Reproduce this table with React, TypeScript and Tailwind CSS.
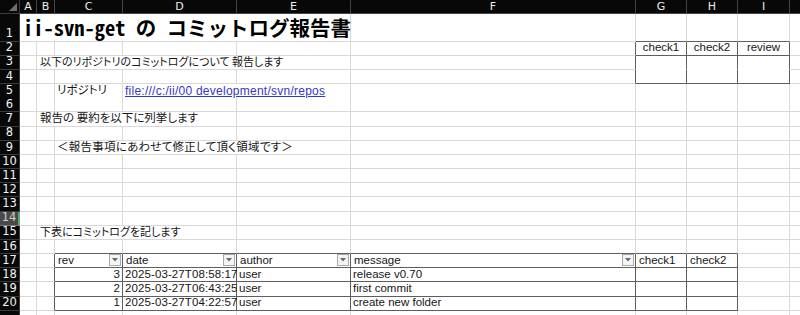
import React, { ReactNode } from "react";

const COLS =
  "grid grid-cols-[20px_17px_18px_68px_114px_114px_285px_51px_51px_52px_60px]";

const JP = "font-['Noto_Sans_CJK_JP',sans-serif] [font-feature-settings:'palt']";
const LAT = "font-['Liberation_Sans','Noto_Sans_CJK_JP',sans-serif]";
const HEAD = "font-['DejaVu_Sans',sans-serif]";

type Spec = { col: number; span?: number; content?: ReactNode; cls?: string };

const spanCls: Record<number, string> = {
  1: "col-span-1",
  2: "col-span-2",
  3: "col-span-3",
  4: "col-span-4",
  5: "col-span-5",
};

function darkBottom(r: number, c: number) {
  return (
    (r >= 16 && r <= 20 && c >= 3 && c <= 8) ||
    ((r === 1 || r === 2 || r === 4) && c >= 7 && c <= 9)
  );
}
function noBottom(r: number, c: number) {
  return r === 3 && c >= 7 && c <= 9;
}
function darkRight(r: number, c: number) {
  return (
    (r >= 17 && r <= 20 && c >= 2 && c <= 8) ||
    (r >= 2 && r <= 4 && c >= 6 && c <= 9)
  );
}

function Cell({
  r,
  c,
  span = 1,
  children,
  cls = "",
}: {
  r: number;
  c: number;
  span?: number;
  children?: ReactNode;
  cls?: string;
}) {
  const last = c + span - 1;
  const rc = darkRight(r, last) ? "border-r-[#5e5e5e]" : "border-r-[#d9d9d9]";
  const bc = noBottom(r, c)
    ? "border-b-white"
    : darkBottom(r, c)
    ? "border-b-[#5e5e5e]"
    : "border-b-[#d9d9d9]";
  return (
    <div
      className={`${spanCls[span]} border-r border-b ${rc} ${bc} bg-white min-w-0 overflow-visible whitespace-nowrap text-[#161616] ${cls}`}
    >
      {children}
    </div>
  );
}

function RowHead({ n, active }: { n?: number; active?: boolean }) {
  return (
    <div
      className={`flex items-end justify-center pb-[1px] border-b ${
        active
          ? "bg-[#4a4a4a] text-[#cfcfcf] border-b-[#7a7a7a] border-r-2 border-r-[#5fa86c]"
          : "bg-[#080808] text-[#f2f2f2] border-b-[#3a3a3a] border-r border-r-[#3a3a3a]"
      } ${HEAD} text-[11.5px] leading-none`}
    >
      {n}
    </div>
  );
}

function Row({
  r,
  h,
  specs = [],
  active,
  hideNum,
}: {
  r: number;
  h: string;
  specs?: Spec[];
  active?: boolean;
  hideNum?: boolean;
}) {
  const out: ReactNode[] = [];
  let c = 1;
  while (c <= 10) {
    const s = specs.find((x) => x.col === c);
    if (s) {
      const span = s.span ?? 1;
      out.push(
        <Cell key={c} r={r} c={c} span={span} cls={s.cls}>
          {s.content}
        </Cell>
      );
      c += span;
    } else {
      out.push(<Cell key={c} r={r} c={c} />);
      c += 1;
    }
  }
  return (
    <div className={`${COLS} ${h}`}>
      <RowHead n={hideNum ? undefined : r} active={active} />
      {out}
    </div>
  );
}

function Drop() {
  return (
    <span className="w-[12px] h-[12px] mr-[1px] shrink-0 bg-[#f4f4f4] border border-[#a9a9a9] flex items-center justify-center">
      <svg width="6" height="4" viewBox="0 0 6 4">
        <polygon points="0,0 6,0 3,3.5" fill="#6a6a6a" />
      </svg>
    </span>
  );
}

const txt = `${JP} leading-none flex items-end pb-[2px]`;
const tcell = `${LAT} text-[11.5px] leading-none flex items-end pb-[1px]`;

function HeadCell({ label }: { label: string }) {
  return (
    <div className={`${tcell} justify-between items-center pl-[3px] h-full`}>
      <span className="self-end">{label}</span>
      <Drop />
    </div>
  );
}

export default function App() {
  const colLabels = ["A", "B", "C", "D", "E", "F", "G", "H", "I", ""];
  const R = "h-[14.18px]";
  const data = [
    { rev: "3", date: "2025-03-27T08:58:17", msg: "release v0.70" },
    { rev: "2", date: "2025-03-27T06:43:25", msg: "first commit" },
    { rev: "1", date: "2025-03-27T04:22:57", msg: "create new folder" },
  ];
  return (
    <div className="w-[800px] h-[315px] overflow-hidden bg-white">
      <div className="w-[850px]">
        {/* column headers */}
        <div className={`${COLS} h-[14px]`}>
          <div className="bg-[#080808] border-r border-b border-[#3a3a3a] relative flex items-end justify-end p-[2px]">
            <svg width="8" height="8" viewBox="0 0 8 8">
              <polygon points="8,0 8,8 0,8" fill="#6e6e6e" />
            </svg>
          </div>
          {colLabels.map((l, i) => (
            <div
              key={i}
              className={`bg-[#080808] border-r border-b border-[#454545] text-[#ececec] ${HEAD} text-[11px] leading-none flex items-center justify-center`}
            >
              {l}
            </div>
          ))}
        </div>

        <Row
          r={1}
          h="h-[27.5px]"
          specs={[
            {
              col: 1,
              span: 5,
              content: (
                <div className="h-full flex items-end pb-[3px] pl-[3px] font-['Noto_Sans_Mono_CJK_JP','Noto_Sans_CJK_JP',sans-serif] font-bold text-[20.5px] leading-none text-black">
                  ii-svn-get の コミットログ報告書
                </div>
              ),
            },
          ]}
        />
        <Row
          r={2}
          h={R}
          specs={[
            { col: 7, content: <div className={`${tcell} justify-center h-full`}>check1</div> },
            { col: 8, content: <div className={`${tcell} justify-center h-full`}>check2</div> },
            { col: 9, content: <div className={`${tcell} justify-center h-full`}>review</div> },
          ]}
        />
        <Row
          r={3}
          h={R}
          specs={[
            {
              col: 2,
              span: 4,
              content: (
                <div className={`${txt} text-[11px] h-full pl-[3px]`}>
                  以下のリポジトリのコミットログについて 報告します
                </div>
              ),
            },
          ]}
        />
        <Row r={4} h={R} />
        <Row
          r={5}
          h={R}
          specs={[
            {
              col: 3,
              content: <div className={`${txt} text-[11.5px] h-full pl-[2px]`}>リポジトリ</div>,
            },
            {
              col: 4,
              span: 2,
              content: (
                <div
                  className={`${LAT} text-[12px] tracking-[0.25px] leading-none h-full flex items-end pb-[1px] pl-[2px] text-[#3535cf] underline underline-offset-[1px]`}
                >
                  file:///c:/ii/00 development/svn/repos
                </div>
              ),
            },
          ]}
        />
        <Row r={6} h={R} />
        <Row
          r={7}
          h={R}
          specs={[
            {
              col: 2,
              span: 3,
              content: (
                <div className={`${txt} text-[11.5px] h-full pl-[3px]`}>報告の 要約を以下に列挙します</div>
              ),
            },
          ]}
        />
        <Row r={8} h={R} />
        <Row
          r={9}
          h={R}
          specs={[
            {
              col: 3,
              span: 3,
              content: (
                <div className={`${txt} text-[11.5px] tracking-[0.25px] h-full pl-[2px]`}>
                  ＜報告事項にあわせて修正して頂く領域です＞
                </div>
              ),
            },
          ]}
        />
        <Row r={10} h={R} />
        <Row r={11} h={R} />
        <Row r={12} h={R} />
        <Row r={13} h={R} />
        <Row r={14} h={R} active />
        <Row
          r={15}
          h={R}
          specs={[
            {
              col: 2,
              span: 3,
              content: (
                <div className={`${txt} text-[11px] h-full pl-[3px]`}>下表にコミットログを記します</div>
              ),
            },
          ]}
        />
        <Row r={16} h={R} />
        <Row
          r={17}
          h={R}
          specs={[
            { col: 3, content: <HeadCell label="rev" /> },
            { col: 4, content: <HeadCell label="date" /> },
            { col: 5, content: <HeadCell label="author" /> },
            { col: 6, content: <HeadCell label="message" /> },
            { col: 7, content: <div className={`${tcell} h-full pl-[3px]`}>check1</div> },
            { col: 8, content: <div className={`${tcell} h-full pl-[3px]`}>check2</div> },
          ]}
        />
        {data.map((d, i) => (
          <Row
            key={d.rev}
            r={18 + i}
            h={R}
            specs={[
              {
                col: 3,
                content: (
                  <div className={`${tcell} h-full justify-end pr-[2px]`}>{d.rev}</div>
                ),
              },
              {
                col: 4,
                content: (
                  <div className={`${tcell} h-full pl-[2px] tracking-[0.1px]`}>{d.date}</div>
                ),
              },
              { col: 5, content: <div className={`${tcell} h-full pl-[2px]`}>user</div> },
              { col: 6, content: <div className={`${tcell} h-full pl-[2px]`}>{d.msg}</div> },
            ]}
          />
        ))}
        <Row r={21} h={R} hideNum />
      </div>
    </div>
  );
}
